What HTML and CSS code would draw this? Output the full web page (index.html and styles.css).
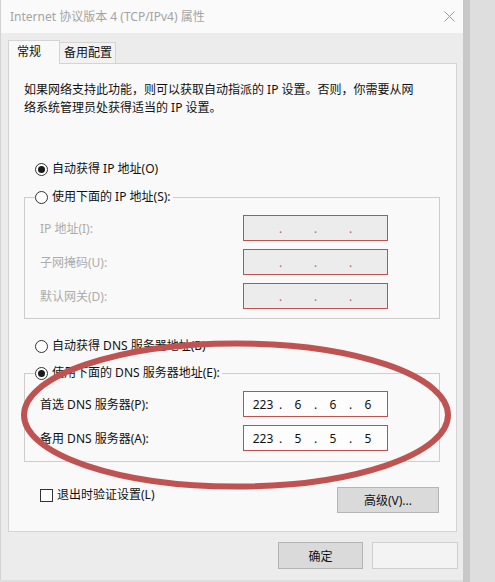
FILE: index.html
```html
<!DOCTYPE html>
<html lang="zh-CN">

<head>
    <meta charset="UTF-8">
    <meta name="viewport" content="width=device-width, initial-scale=1.0">
    <title>Internet 协议版本 4 (TCP/IPv4) 属性</title>
    <link rel="stylesheet" href="styles.css">
</head>

<body>
    <div class="screen">
        <div class="window">
            <!-- Title bar -->
            <div class="titlebar">
                <span class="title">Internet 协议版本 4 (TCP/IPv4) 属性</span>
                <svg class="close" width="11" height="11" viewBox="0 0 11 11">
                    <path d="M0.5 0.5 L10.5 10.5 M10.5 0.5 L0.5 10.5" stroke="#9a9a9a" stroke-width="1" fill="none" />
                </svg>
            </div>

            <!-- Tabs -->
            <div class="tabs">
                <div class="tab active">常规</div>
                <div class="tab">备用配置</div>
            </div>

            <div class="panel">
                <p class="intro">如果网络支持此功能，则可以获取自动指派的 IP 设置。否则，你需要从网<br>络系统管理员处获得适当的 IP 设置。</p>

                <div class="radio first"><span class="dot checked"></span>自动获得 IP 地址(O)</div>
                <fieldset class="group">
                    <legend><span class="radio"><span class="dot"></span>使用下面的 IP 地址(S):</span></legend>
                    <div class="rows">
                        <div class="field disabled">
                            <span>IP 地址(I):</span>
                            <div class="ip"><span></span><i>.</i><span></span><i>.</i><span></span><i>.</i><span></span></div>
                        </div>
                        <div class="field disabled">
                            <span>子网掩码(U):</span>
                            <div class="ip"><span></span><i>.</i><span></span><i>.</i><span></span><i>.</i><span></span></div>
                        </div>
                        <div class="field disabled">
                            <span>默认网关(D):</span>
                            <div class="ip"><span></span><i>.</i><span></span><i>.</i><span></span><i>.</i><span></span></div>
                        </div>
                    </div>
                </fieldset>

                <div class="radio dns-auto"><span class="dot"></span>自动获得 DNS 服务器地址(B)</div>
                <fieldset class="group dns">
                    <legend><span class="radio"><span class="dot checked"></span>使用下面的 DNS 服务器地址(E):</span></legend>
                    <div class="rows">
                        <div class="field">
                            <span>首选 DNS 服务器(P):</span>
                            <div class="ip"><span>223</span><i>.</i><span>6</span><i>.</i><span>6</span><i>.</i><span>6</span></div>
                        </div>
                        <div class="field">
                            <span>备用 DNS 服务器(A):</span>
                            <div class="ip"><span>223</span><i>.</i><span>5</span><i>.</i><span>5</span><i>.</i><span>5</span></div>
                        </div>
                    </div>
                </fieldset>

                <div class="bottom-row">
                    <div class="check"><span class="box"></span>退出时验证设置(L)</div>
                    <button class="btn advanced">高级(V)...</button>
                </div>
            </div>

            <div class="actions">
                <button class="btn ok">确定</button>
                <button class="btn cancel"></button>
            </div>
        </div>
        <div class="edge"></div>

        <!-- Red annotation ring -->
        <svg class="mark" width="495" height="582" viewBox="0 0 495 582">
            <ellipse cx="236" cy="415" rx="212" ry="71.5" fill="none" stroke="#bf5351" stroke-width="6" />
        </svg>
    </div>
</body>

</html>
```

FILE: styles.css
```css
/* General Reset */
* {
    margin: 0;
    padding: 0;
    box-sizing: border-box;
}

body,
html {
    height: 100%;
    font-family: "Noto Sans", "Noto Sans CJK SC", sans-serif;
    font-size: 12px;
    background-color: #dedede;
    color: #111;
}

.screen {
    position: relative;
    display: flex;
    width: 495px;
    height: 582px;
    overflow: hidden;
}

/* Dialog window */
.window {
    width: 463px;
    height: 580px;
    background-color: #ececec;
    border-left: 1px solid #d2d2d2;
}

.edge {
    width: 7px;
    height: 582px;
    background-color: #c8c8c8;
}

.titlebar {
    height: 33px;
    display: flex;
    align-items: center;
    padding-left: 9px;
    background-color: #fafafa;
}

.title {
    color: #a4a4a4;
    line-height: 16px;
}

.close {
    margin-left: auto;
    margin-right: 8px;
}

/* Tabs */
.tabs {
    height: 30px;
    display: flex;
    align-items: flex-end;
    padding-left: 7px;
}

.tab {
    height: 21px;
    width: 57px;
    margin-left: -1px;
    padding-left: 4px;
    line-height: 20px;
    border: 1px solid #d4d4d4;
    border-bottom: none;
    background-color: #f2f2f2;
}

.tab.active {
    position: relative;
    z-index: 1;
    height: 24px;
    width: 52px;
    margin-left: 0;
    margin-bottom: -1px;
    padding-left: 8px;
    line-height: 22px;
    background-color: #f9f9f9;
}

.panel {
    width: 449px;
    height: 469px;
    margin-left: 7px;
    background-color: #f9f9f9;
    border: 1px solid #d4d4d4;
}

.intro {
    margin-top: 17px;
    padding-left: 15px;
    line-height: 18px;
}

/* Radio buttons */
.radio {
    display: flex;
    align-items: center;
    gap: 4px;
    height: 16px;
    line-height: 16px;
    white-space: nowrap;
}

.radio.first {
    margin-top: 44px;
    padding-left: 26px;
}

.radio.dns-auto {
    margin-top: 19px;
    padding-left: 26px;
}

.dot {
    width: 13px;
    height: 13px;
    border: 1px solid #333;
    border-radius: 50%;
    display: flex;
    align-items: center;
    justify-content: center;
    background-color: #fff;
}

.dot.checked::after {
    content: "";
    width: 7px;
    height: 7px;
    border-radius: 50%;
    background-color: #1a1a1a;
}

/* Group boxes */
.group {
    width: 416px;
    min-width: 0;
    margin: 12px 0 0 15px;
    padding: 10px 0 9px 15px;
    border: 1px solid #cdcdcd;
}

.group.dns {
    margin-top: 11px;
    padding-bottom: 10px;
}

.group legend {
    margin-left: -5px;
    padding: 0 2px 0 0;
    background-color: #f9f9f9;
}

.rows {
    display: grid;
    row-gap: 8px;
}

.field {
    display: grid;
    grid-template-columns: 203px 145px;
    align-items: center;
}

.field.disabled {
    color: #acacac;
}

.ip {
    height: 26px;
    display: flex;
    align-items: center;
    padding-left: 5px;
    border: 1px solid #c05050;
    background-color: #fdfdfd;
    font-family: "Noto Sans", sans-serif;
}

.field.disabled .ip {
    background-color: #ececec;
}

.ip span {
    width: 28px;
    text-align: center;
}

.ip i {
    width: 7px;
    font-style: normal;
    text-align: center;
}

.field.disabled .ip i {
    color: #c06060;
}

/* Check box and advanced button */
.bottom-row {
    display: flex;
    align-items: flex-start;
    margin-top: 25px;
    padding-left: 31px;
}

.check {
    display: flex;
    align-items: center;
    gap: 4px;
    line-height: 16px;
}

.box {
    width: 13px;
    height: 13px;
    border: 1px solid #333;
    background-color: #fff;
}

.btn {
    height: 27px;
    font-family: inherit;
    font-size: 12px;
    color: #111;
    background-color: #dadada;
    border: 1px solid #b4b4b4;
}

.advanced {
    width: 102px;
    height: 26px;
    margin-left: auto;
    margin-right: 17px;
}

.actions {
    display: flex;
    justify-content: flex-end;
    gap: 9px;
    margin-top: 10px;
    padding-right: 5px;
}

.ok {
    width: 85px;
}

.cancel {
    width: 86px;
    background-color: #f3f3f3;
    border-color: #cfcfcf;
}

/* Annotation */
.mark {
    position: absolute;
    top: 0;
    left: 0;
    pointer-events: none;
}
```
